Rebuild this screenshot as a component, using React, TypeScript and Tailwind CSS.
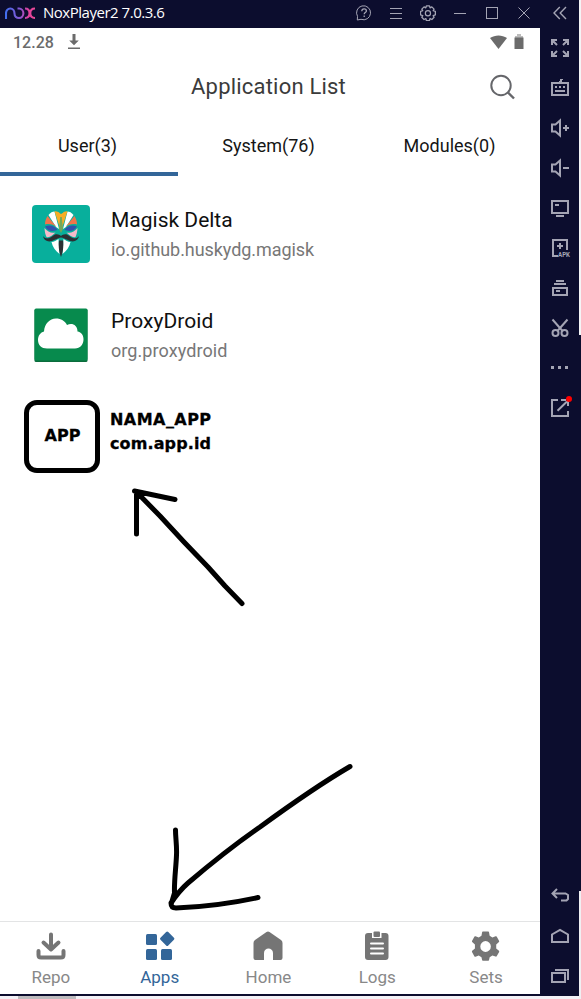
import type { ReactNode } from "react";

const railColor = "#a4a4b4";

function Rail({ children, crisp = true }: { children: ReactNode; crisp?: boolean }) {
  return (
    <div className="flex h-10 shrink-0 items-center pl-2">
      <svg
        width="24"
        height="24"
        viewBox="0 0 24 24"
        fill="none"
        stroke={railColor}
        strokeWidth="2"
        shapeRendering={crisp ? "crispEdges" : "auto"}
      >
        {children}
      </svg>
    </div>
  );
}

function TitleBar() {
  return (
    <header className="flex h-7 shrink-0 items-center bg-[#0c0d2e] pl-[5px]">
      <svg className="-mt-[2px]" width="31" height="13" viewBox="0 0 31 13" fill="none" strokeWidth="2.1">
        <defs>
          <linearGradient id="nox" x1="0" x2="31" y1="0" y2="0" gradientUnits="userSpaceOnUse">
            <stop offset="0" stopColor="#3f6ff0" />
            <stop offset=".5" stopColor="#8a55d0" />
            <stop offset=".75" stopColor="#e0409c" />
            <stop offset="1" stopColor="#ee4d97" />
          </linearGradient>
        </defs>
        <path
          d="M1 12V6.500C1 3.500 2.800 1.500 5.300 1.500S9.500 3.500 9.500 6.500C9.500 9.500 11.600 11 14 11s4.400-2 4.400-4.700S16.400 1.500 14 1.500h-1.500M20 1.500c3 0 4.500 1.500 4.500 4.800 0 3.200-1.500 4.700-4.500 4.700M30 1.500c-3.200 0-4.700 1.500-4.700 4.800 0 3.200 1.500 4.700 4.700 4.700"
          stroke="url(#nox)"
        />
      </svg>
      <span className="-mt-[3px] ml-[7px] w-[300px] whitespace-nowrap font-['Open_Sans','Noto_Sans',sans-serif] text-[15px] leading-[25px] tracking-[-0.480px] text-white">
        NoxPlayer2 7.0.3.6
      </span>
      <svg className="-mt-[2px] ml-[13px]" width="16" height="16" viewBox="0 0 16 16" fill="none" stroke={railColor}>
        <path d="M1.300 15 1.500 11.300A7 7 0 1 1 5 14.300Z" />
        <path d="M5.800 6.200c0-1.500.9-2.300 2.300-2.300s2.300.8 2.300 2c0 1.600-2.200 1.700-2.200 3.300M8.200 10.500v1.400" strokeWidth="1.300" />
      </svg>
      <svg className="-mt-[2px] ml-[17px]" width="14" height="14" viewBox="0 0 14 14" stroke={railColor} shapeRendering="crispEdges">
        <path d="M1 2.500h12M1 7.500h12M1 12.500h12" />
      </svg>
      <svg className="-mt-[2px] ml-[17px]" width="16" height="16" viewBox="0 0 16 16" fill="none" stroke={railColor} strokeLinejoin="round">
        <g transform="translate(-1.500 -.5) scale(1.180)">
          <path d="M6.700 1.200h2.600l.5 1.600 1.500-.8 1.900 1.900-.8 1.400 1.900.6v2.900l-1.900.6.8 1.400-1.900 1.900-1.500-.8-.5 1.700H6.700l-.5-1.700-1.500.8-1.900-1.900.8-1.400-1.900-.6V5.900l1.900-.6-.8-1.400L4.700 2l1.500.8z" strokeWidth="1.100" />
          <circle cx="8" cy="7.400" r="2.200" />
        </g>
      </svg>
      <svg className="-mt-[2px] ml-[18px]" width="12" height="14" viewBox="0 0 12 14" stroke={railColor} shapeRendering="crispEdges">
        <path d="M0 7.500h12" />
      </svg>
      <svg className="-mt-[2px] ml-[20px]" width="12" height="12" viewBox="0 0 12 12" fill="none" stroke={railColor} shapeRendering="crispEdges">
        <path d="M.5 .5h11v11H.5z" />
      </svg>
      <svg className="-mt-[2px] ml-[20px]" width="12" height="12" viewBox="0 0 12 12" stroke={railColor}>
        <path d="m.5 .5 11 11m0-11-11 11" />
      </svg>
      <svg className="-mt-[2px] ml-[23px]" width="14" height="14" viewBox="0 0 14 14" fill="none" stroke={railColor} strokeWidth="1.400">
        <path d="M6.800 1 1 7l5.800 6M13 1 7.200 7l5.800 6" />
      </svg>
    </header>
  );
}

function SideRail() {
  return (
    <aside className="flex w-[39px] shrink-0 flex-col bg-[#0c0d2e]">
      <Rail crisp={false}>
        <path d="M4 9V4h5M4 4l5 5M15 4h5v5M20 4l-5 5M4 15v5h5M4 20l5-5M20 15v5h-5M20 20l-5-5" />
      </Rail>
      <Rail>
        <path d="M4 7h16v12H4zM12 6l2-3M7 11h2m2 0h2m2 0h2M7 15h10" />
      </Rail>
      <Rail crisp={false}>
        <path d="M4 8.500h3.500L12 4.500v15l-4.500-4H4zM15 12h6M18 9v6" />
      </Rail>
      <Rail crisp={false}>
        <path d="M4 8.500h3.500L12 4.500v15l-4.500-4H4zM15 12h6" />
      </Rail>
      <Rail>
        <path d="M4 5h16v12H4zM7 9h4M8 20h8" />
      </Rail>
      <Rail>
        <path d="M10 20H5V4h14v10M12 7v6M9 10h6" />
        <text
          x="10"
          y="21"
          fill={railColor}
          stroke="none"
          fontSize="7.500"
          fontWeight="700"
          fontFamily="Roboto, sans-serif"
          textLength="12"
          lengthAdjust="spacingAndGlyphs"
        >
          APK
        </text>
      </Rail>
      <Rail>
        <path d="M8 5h8M6 8h12M5 12h14v7H5zM8 15h4" />
      </Rail>
      <Rail crisp={false}>
        <path d="M4.500 3.500 15 15.500M19.500 3.500 9 15.500" />
        <circle cx="7.500" cy="17" r="3" />
        <circle cx="16.500" cy="17" r="3" />
      </Rail>
      <Rail>
        <path d="M3 11.500h3m4 0h3m4 0h3" strokeWidth="3" />
      </Rail>
      <Rail crisp={false}>
        <path d="M10 4H4v16h16v-5M20 10V5M9.500 14.700 19 5.500M13 4h5" />
        <circle cx="21" cy="3" r="3" fill="#ff0000" stroke="none" />
      </Rail>
      <div className="flex-1" />
      <div className="-mb-[2px]">
        <Rail crisp={false}>
          <path d="M9 5 4.500 9.500 9 14M5 9.500h12.500L20 11v4l-1.500 1.500H13" />
        </Rail>
        <Rail crisp={false}>
          <path d="M4 18V10.500l8-4.500 8 4.500V18z" />
        </Rail>
        <Rail>
          <path d="M4 9h13v9H4zM7 6h13v10" />
        </Rail>
      </div>
    </aside>
  );
}

function MaskHalf() {
  return (
    <>
      <path d="M16.500 10C18.500 7.500 20.500 6.500 22.500 6.500L27 24l-3-2z" fill="#fff" />
      <path d="M13 19.500c0-3 .7-5.500 2.500-8.500l9 11c-3-2.500-7-3.500-11.500-2.500z" fill="#f0744a" />
      <path d="M22.500 6.300c1.500 0 3 .2 4 1l2 3-.3 13.500z" fill="#f7ad25" />
      <path d="M12.500 23c.2 3.500.8 6.500 2 9 3 1 6-2 9-4.500-4 1-8-.5-11-4.500z" fill="#f5bbca" />
      <path d="M13 21.500c4.500-2 9-1 12.500 3-3.500 2.500-10 2-12.500-3z" fill="#3251ad" />
      <path d="M19.500 37c2.500 0 5-1.500 7-3l1 15c-4-3-7-7-8-12z" fill="#fff" />
    </>
  );
}

function MagiskIcon() {
  return (
    <svg className="-mt-[2px]" width="58" height="58" viewBox="0 0 58 58">
      <rect width="58" height="58" rx="4" fill="#08af9c" />
      <MaskHalf />
      <g transform="matrix(-1 0 0 1 58 0)">
        <MaskHalf />
      </g>
      <path d="M25.500 7 29 9l3.500-2-2.500 10.500h-2z" fill="#f7ad25" />
      <path d="M28.200 12h1.600l1.200 12-2 4-2-4z" fill="#73a75a" />
      <path
        d="M11 31c2 3 6 3 9 .5 4-3.500 7-2 9-.5 2-1.500 5-3 9 .5 3 2.500 7 2.500 9-.5-1 5-6 7-11 4-3-1-5-2.500-7-2.500s-4 1.500-7 2.500c-5 3-10 1-11-4zM27 35.500h4c1 6.500-.5 13-2 16.500-1.500-3.500-3-10-2-16.500z"
        fill="#2b3034"
      />
    </svg>
  );
}

function ProxyIcon() {
  return (
    <svg className="-mt-px" width="54" height="54" viewBox="0 0 54 54">
      <rect x=".5" y="1" width="53" height="53" rx="1.500" fill="#0b6c3c" />
      <rect x=".5" y=".5" width="53" height="52" rx="1.500" fill="#078a4d" />
      <path
        d="M13 40.500C7.500 40.500 4 37 4 32c0-4.500 2.500-7.500 6-8.500C10.500 16 15.500 10.500 22 10.500c5 0 9 2.500 11 6.500 5-2.500 10.500 0 10.500 6.500 4 .5 6 4 6 8 0 5-3.500 9-8.500 9z"
        fill="#fff"
      />
    </svg>
  );
}

function AppRow({
  icon,
  name,
  id,
  nameTracking,
  idTracking,
}: {
  icon: ReactNode;
  name: string;
  id: string;
  nameTracking: string;
  idTracking: string;
}) {
  return (
    <li className="flex h-[101px] items-center">
      <div className="flex w-[122px] shrink-0 justify-center">{icon}</div>
      <div className="-ml-[11px] whitespace-nowrap">
        <p className={`text-[21px] leading-[30px] text-[#101010] ${nameTracking}`}>{name}</p>
        <p className={`text-[18px] leading-[30px] text-[#777] ${idTracking}`}>{id}</p>
      </div>
    </li>
  );
}

function NavItem({ icon, label, active = false }: { icon: ReactNode; label: string; active?: boolean }) {
  return (
    <div className={`flex flex-col items-center pt-2 ${active ? "text-[#336699]" : "text-[#757575]"}`}>
      <svg width="34" height="34" viewBox="0 0 34 34" fill="currentColor">
        {icon}
      </svg>
      <span className={`text-[17px] leading-[26px] ${active ? "" : "text-[#888]"}`}>{label}</span>
    </div>
  );
}

function NavBar() {
  return (
    <nav className="-ml-[3.500px] grid h-[73px] w-[544px] grid-cols-5 border-t border-[#e3e4e5]">
      <NavItem
        label="Repo"
        icon={
          <g fill="none" stroke="currentColor" strokeWidth="4" strokeLinecap="round" strokeLinejoin="round">
            <path d="M17 4.500v15M9.500 12.500 17 19.500l7.500-7M4.500 21v4c0 1.500.8 2.500 2.500 2.500h20c1.700 0 2.500-1 2.500-2.500v-4" />
          </g>
        }
      />
      <NavItem
        active
        label="Apps"
        icon={
          <>
            <rect x="3" y="4" width="11" height="11" rx="1.500" />
            <rect x="3" y="19" width="11" height="11" rx="1.500" />
            <rect x="18" y="19" width="11" height="11" rx="1.500" />
            <rect x="18.700" y="3.300" width="11" height="11" rx="1.500" transform="rotate(45 24.200 8.800)" />
          </>
        }
      />
      <NavItem
        label="Home"
        icon={<path d="M15.500 2q1.500-1 3 0L30 10q1.500 1 1.500 3V28q0 2-2 2h-7.500V23c0-6-9-6-9 0v7H4.500q-2 0-2-2V13q0-2 1.500-3z" />}
      />
      <NavItem
        label="Logs"
        icon={
          <>
            <rect x="5" y="3" width="23.500" height="27" rx="3" />
            <rect x="12" y="1" width="9.500" height="7" fill="#fff" />
            <rect x="13.500" y="1.500" width="6.500" height="5.500" rx="1" />
            <path d="M11 13.500h12M11 18.500h12M11 23.500h12" stroke="#fff" strokeWidth="2" strokeLinecap="round" />
          </>
        }
      />
      <NavItem
        label="Sets"
        icon={
          <path
            transform="translate(1.100 1.100) scale(.91 .94)"
            fillRule="evenodd"
            d="m14 .500h6q.7 0 .8.800L21.500 5l3 1.700 3.500-1.300q.8-.2 1.200.4l2.700 4.700q.3.600-.2 1.200l-3 2.500v4.300l3 2.500q.5.500.2 1.200l-2.700 4.500q-.4.700-1.200.4L24.500 26l-3 1.700-.7 3q-.1.800-.8.800h-6q-.7 0-.8-.8l-.7-3-3-1.700L6 27.300q-.8.300-1.200-.4L2.100 22.200q-.3-.6.200-1.200l3-2.500v-4.300l-3-2.500q-.5-.6-.2-1.200l2.700-4.700q.4-.6 1.200-.4L9.500 6.700l3-1.700.7-3.700q.1-.8.800-.8zM17 10.600a5.800 5.800 0 1 0 0 11.600 5.800 5.800 0 0 0 0-11.600z"
          />
        }
      />
    </nav>
  );
}

export default function App() {
  return (
    <div className="flex h-[999px] w-[581px] overflow-hidden bg-white font-[Roboto,sans-serif]">
      <div className="flex w-[579px] shrink-0 flex-col">
        <TitleBar />
        <div className="flex h-[966px] shrink-0">
          <main className="relative flex w-[540px] shrink-0 flex-col overflow-hidden bg-white">
            <div className="flex h-7 shrink-0 items-center pl-[13px] text-[#6b6b6b]">
              <span className="w-[54px] pt-[2px] text-[16px] font-medium leading-[26px] tracking-normal">12.28</span>
              <svg width="14" height="16" viewBox="0 0 14 16" fill="currentColor">
                <path d="M5.500 0h3v6.500h3.300L7 11.300 2.200 6.500h3.300zM1 13.500h12V15H1z" />
              </svg>
              <svg className="ml-[408px]" width="19" height="15" viewBox="0 0 19 15" fill="currentColor">
                <path d="M1 3C6-.5 13-.5 18 3L9.500 14z" />
              </svg>
              <svg className="-mt-px ml-[6px]" width="10" height="16" viewBox="0 0 10 16" fill="currentColor">
                <path d="M3 0h4v2h2v2H1V2h2z" fill="#bcbcbc" />
                <path d="M.5 3.500h9V15h-9z" />
              </svg>
            </div>
            <div className="flex h-[61px] shrink-0 items-center justify-center">
              <h1 className="ml-[110px] flex-1 whitespace-nowrap text-center text-[22px] leading-8 tracking-[0.200px] text-[#3b3b3b]">
                Application List
              </h1>
              <div className="w-[113px] pl-[62px]">
                <svg width="28" height="28" viewBox="0 0 28 28" fill="none" stroke="#65666a" strokeWidth="2">
                  <circle cx="12" cy="12.500" r="9.700" />
                  <path d="m19 19.500 6 6" strokeWidth="2.400" />
                </svg>
              </div>
            </div>
            <div className="grid h-[59px] shrink-0 grid-cols-[178px_180px_182px] text-center text-[18px] leading-[53px] text-[#151515]">
              <span className="border-b-4 border-[#336699] pr-[3px] pt-[2px]">User(3)</span>
              <span className="pl-px pt-[2px]">System(76)</span>
              <span className="pl-px pt-[2px]">Modules(0)</span>
            </div>
            <ul className="mt-[8px]">
              <AppRow
                icon={<MagiskIcon />}
                name="Magisk Delta"
                id="io.github.huskydg.magisk"
                nameTracking="tracking-normal"
                idTracking="tracking-[-0.060px]"
              />
              <AppRow
                icon={<ProxyIcon />}
                name="ProxyDroid"
                id="org.proxydroid"
                nameTracking="tracking-[0.050px]"
                idTracking="tracking-[0.080px]"
              />
              <li className="flex h-[101px] items-center pl-6 font-['DejaVu_Sans',sans-serif] text-[16px] font-bold leading-6 text-black [-webkit-text-stroke:0.3px_#000]">
                <div className="flex h-[73px] w-[76px] shrink-0 items-center justify-center rounded-[13px] border-5 border-black pb-px pl-px">
                  APP
                </div>
                <div className="mb-[10px] ml-[10px] whitespace-nowrap">
                  <p className="tracking-[0.450px]">NAMA_APP</p>
                  <p className="tracking-[0.120px]">com.app.id</p>
                </div>
              </li>
            </ul>
            <div className="flex-1" />
            <NavBar />
            <svg
              className="absolute left-0 top-0"
              width="540"
              height="966"
              viewBox="0 28 540 966"
              fill="none"
              stroke="#000"
              strokeWidth="5"
              strokeLinecap="round"
              strokeLinejoin="round"
            >
              <path d="M134.500 491 175 499.500M136.500 492v42M136.500 492 160 516l24 26 24 25 17 19 17 17.500" />
              <path d="M350 766.500C315 787 286 808 260 827c-29 20-52 39-72 56-8 7-13 14-17 20 0 4 2 5 5 5 24-1 48-3 82-10.500M175.500 830c0 8 1.500 16 1 25-.5 13-2.500 26-2 38l-3 10" />
            </svg>
          </main>
          <SideRail />
        </div>
        <div className="h-[2px] shrink-0 bg-[#0c0d2e]" />
        <div className="h-[3px] shrink-0 bg-[#f3f1f6] pl-[18px]">
          <div className="h-[3px] w-[58px] bg-[#bdbbbe]" />
        </div>
      </div>
      <div className="flex w-[2px] flex-col">
        <div className="h-[335px] bg-[#f4f4f6]" />
        <div className="h-[556px] bg-[#0c0d2e]" />
        <div className="h-[108px] bg-[#f0eff2]" />
      </div>
    </div>
  );
}
